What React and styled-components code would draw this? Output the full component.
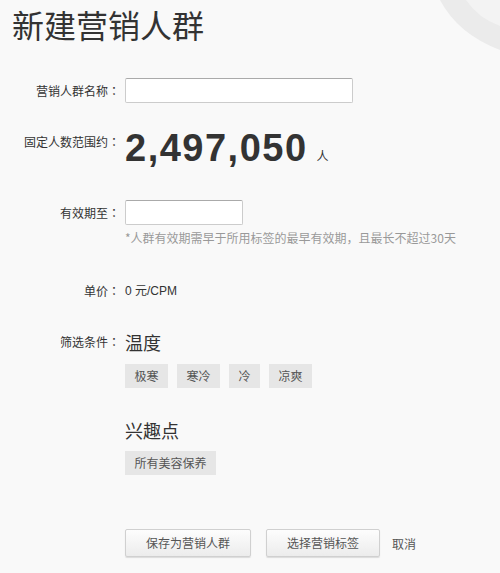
import React from "react"
import styled, { createGlobalStyle } from "styled-components"

const GlobalStyle = createGlobalStyle`
  html, body {
    margin: 0;
    padding: 0;
    background: #f9f9f9;
  }
  body {
    font-family: "Liberation Sans", "Noto Sans CJK SC", sans-serif;
    color: #333;
  }
`

const Page = styled.div`
  position: relative;
  width: 500px;
  height: 573px;
  overflow: hidden;
  background: #f9f9f9;
`

const Swoosh = styled.svg`
  position: absolute;
  top: 0;
  right: 0;
`

const Title = styled.h1`
  margin: 4px 0 0 12px;
  font-family: "Noto Sans CJK SC", sans-serif;
  font-weight: 400;
  font-size: 32px;
  line-height: 40px;
  color: #333;
`

const Row = styled.div`
  display: grid;
  grid-template-columns: 120px 1fr;
  column-gap: 5px;
  align-items: start;
  margin-top: ${props => props.top}px;
`

const Label = styled.div`
  text-align: right;
  font-family: "Noto Sans CJK SC", sans-serif;
  font-size: 12px;
  color: #333;
  height: ${props => props.lh || 18}px;
  line-height: ${props => props.lh || 18}px;
  padding-top: ${props => props.pt || 0}px;
  white-space: nowrap;

  &::after {
    content: "：";
    font-family: "Noto Sans CJK TC", sans-serif;
  }
`

const Input = styled.input`
  box-sizing: border-box;
  display: block;
  width: ${props => props.w}px;
  height: 25px;
  border: 1px solid #ccc;
  border-top-color: #aaa;
  border-radius: 2px;
  background: #fff;
  outline: none;
`

const Count = styled.div`
  height: 42px;
  font-family: "Liberation Sans", sans-serif;
  font-weight: 700;
  font-size: 38px;
  letter-spacing: 1.5px;
  line-height: 42px;
  color: #333;
  white-space: nowrap;
`

const Unit = styled.span`
  font-family: "Noto Sans CJK SC", sans-serif;
  font-weight: 400;
  font-size: 12px;
  line-height: 0;
  letter-spacing: 0;
  margin-left: 9px;
`

const Hint = styled.div`
  margin-top: 4px;
  font-family: "Noto Sans CJK SC", sans-serif;
  font-size: 12px;
  line-height: 18px;
  color: #999;
  white-space: nowrap;
`

const Price = styled.div`
  height: 20px;
  font-family: "Liberation Sans", "Noto Sans CJK SC", sans-serif;
  font-size: 12px;
  line-height: 20px;
  color: #333;
`

const GroupTitle = styled.div`
  height: 26px;
  font-family: "Noto Sans CJK SC", sans-serif;
  font-size: 18px;
  line-height: 26px;
  color: #333;
  margin-top: ${props => props.top || 0}px;
`

const Tags = styled.div`
  display: flex;
  gap: 9px;
  margin-top: ${props => props.top}px;
`

const Tag = styled.span`
  display: inline-block;
  height: 24px;
  line-height: 24px;
  padding: 0 9.5px;
  background: #e6e6e6;
  font-family: "Noto Sans CJK SC", sans-serif;
  font-size: 12px;
  color: #555;
`

const Actions = styled.div`
  display: flex;
  align-items: center;
  gap: 15px;
`

const Button = styled.button`
  height: 28px;
  padding: 0 20px;
  border: 1px solid #d0d0d0;
  border-radius: 2px;
  background: linear-gradient(#fdfdfd, #ececec);
  box-shadow: 0 1px 1px rgba(0, 0, 0, 0.12);
  font-family: "Noto Sans CJK SC", sans-serif;
  font-size: 12px;
  line-height: 26px;
  color: #555;
  cursor: pointer;
`

const Cancel = styled.a`
  font-family: "Noto Sans CJK SC", sans-serif;
  font-size: 12px;
  color: #555;
  margin-left: -3px;
`

export default function App() {
  return (
    <Page>
      <GlobalStyle />
      <Swoosh width="80" height="60" viewBox="0 0 80 60">
        <path d="M20 0 Q38 34 80 50 L80 0 Z" fill="#ebebeb" />
        <path d="M46 0 Q58 18 80 26 L80 0 Z" fill="#f3f3f3" />
      </Swoosh>
      <Title>新建营销人群</Title>

      <Row top={34}>
        <Label lh={25}>营销人群名称</Label>
        <Input w={228} />
      </Row>

      <Row top={24}>
        <Label pt={6}>固定人数范围约</Label>
        <Count>
          2,497,050<Unit>人</Unit>
        </Count>
      </Row>

      <Row top={31}>
        <Label lh={25}>有效期至</Label>
        <div>
          <Input w={118} />
          <Hint>*人群有效期需早于所用标签的最早有效期，且最长不超过30天</Hint>
        </div>
      </Row>

      <Row top={34}>
        <Label lh={20}>单价</Label>
        <Price>0 元/CPM</Price>
      </Row>

      <Row top={28}>
        <Label lh={26}>筛选条件</Label>
        <div>
          <GroupTitle>温度</GroupTitle>
          <Tags top={9}>
            <Tag>极寒</Tag>
            <Tag>寒冷</Tag>
            <Tag>冷</Tag>
            <Tag>凉爽</Tag>
          </Tags>
          <GroupTitle top={29}>兴趣点</GroupTitle>
          <Tags top={8}>
            <Tag>所有美容保养</Tag>
          </Tags>
        </div>
      </Row>

      <Row top={54}>
        <span />
        <Actions>
          <Button>保存为营销人群</Button>
          <Button>选择营销标签</Button>
          <Cancel>取消</Cancel>
        </Actions>
      </Row>
    </Page>
  )
}
